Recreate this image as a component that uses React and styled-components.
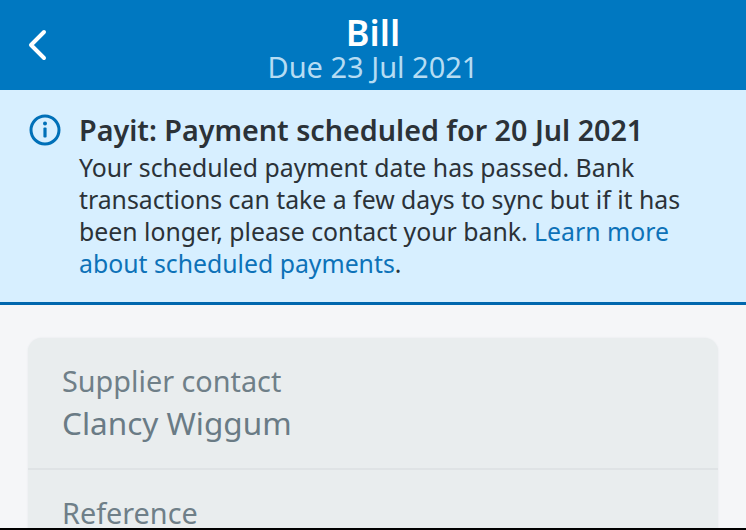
import React from 'react'
import styled, { createGlobalStyle } from 'styled-components'

const GlobalStyle = createGlobalStyle`
html, body {
  margin: 0;
  padding: 0;
  background: #000;
}
body {
  font-family: "Noto Sans", "Open Sans", sans-serif;
}
`
const Screen = styled.div`
width: 746px;
height: 528px;
overflow: hidden;
background: #f5f6f8;
display: flex;
flex-direction: column;
`
const Header = styled.header`
height: 90px;
flex-shrink: 0;
background: #0078c1;
display: grid;
grid-template-columns: 79px 1fr 79px;
align-items: center;
`
const BackButton = styled.button`
border: 0;
background: none;
padding: 0 0 0 27px;
display: flex;
color: #fff;
`
const HeaderText = styled.div`
display: flex;
flex-direction: column;
align-items: center;
padding-top: 8px;
`
const Title = styled.div`
color: #fff;
font-size: 36px;
font-weight: 600;
line-height: 36px;
`
const Subtitle = styled.div`
color: #b5dcf3;
font-size: 29px;
line-height: 32px;
`
const Banner = styled.section`
flex-shrink: 0;
height: 190px;
background: #d7efff;
border-bottom: 3px solid #0067ae;
display: flex;
gap: 18px;
padding: 22px 28px 0 29px;
`
const InfoIcon = styled.svg`
flex-shrink: 0;
width: 32px;
height: 32px;
margin-top: 2px;
color: #0070b8;
`
const BannerBody = styled.div`
color: #2b3238;
`
const BannerTitle = styled.h2`
margin: 0 0 3px;
font-size: 28.7px;
font-weight: 600;
line-height: 36px;
white-space: nowrap;
`
const BannerText = styled.p`
margin: 0;
font-size: 24.8px;
line-height: 32px;
white-space: nowrap;
`
const BannerLink = styled.a`
color: #0d72b8;
text-decoration: none;
`
const Content = styled.main`
padding: 33px 28px 0;
`
const Card = styled.section`
padding-top: 1px;
background: #e9edee;
border-radius: 14px 14px 0 0;
box-shadow: 0 0 2px #e2e5e8;
`
const Row = styled.div`
padding: 24px 34px 24px;
border-bottom: ${props => props.$divider ? '2px solid #dfe3e5' : 'none'};
& + & {
  padding-top: 25px;
}
`
const Label = styled.div`
color: #6f7f88;
font-size: 28.8px;
line-height: 36px;
margin-bottom: 3px;
`
const Value = styled.div`
color: #6a7b85;
font-size: 31.5px;
line-height: 42px;
`

const App = () => (
  <Screen>
    <GlobalStyle />
    <Header>
      <BackButton aria-label="Back">
        <svg width="22" height="32" viewBox="0 0 22 32" fill="none" stroke="currentColor" strokeWidth="4" strokeLinecap="round" strokeLinejoin="round">
          <path d="M17 3 L4 16 L17 29" />
        </svg>
      </BackButton>
      <HeaderText>
        <Title>Bill</Title>
        <Subtitle>Due 23 Jul 2021</Subtitle>
      </HeaderText>
    </Header>
    <Banner>
      <InfoIcon viewBox="0 0 32 32" fill="none">
        <circle cx="16" cy="16" r="14" stroke="currentColor" strokeWidth="3" />
        <circle cx="16" cy="9.5" r="2" fill="currentColor" />
        <rect x="14.4" y="13.5" width="3.2" height="10" rx="1" fill="currentColor" />
      </InfoIcon>
      <BannerBody>
        <BannerTitle>Payit: Payment scheduled for 20 Jul 2021</BannerTitle>
        <BannerText>
          Your scheduled payment date has passed. Bank<br />
          transactions can take a few days to sync but if it has<br />
          been longer, please contact your bank. <BannerLink href="#">Learn more<br />
          about scheduled payments</BannerLink>.
        </BannerText>
      </BannerBody>
    </Banner>
    <Content>
      <Card>
        <Row $divider>
          <Label>Supplier contact</Label>
          <Value>Clancy Wiggum</Value>
        </Row>
        <Row>
          <Label>Reference</Label>
        </Row>
      </Card>
    </Content>
  </Screen>
)

export default App
